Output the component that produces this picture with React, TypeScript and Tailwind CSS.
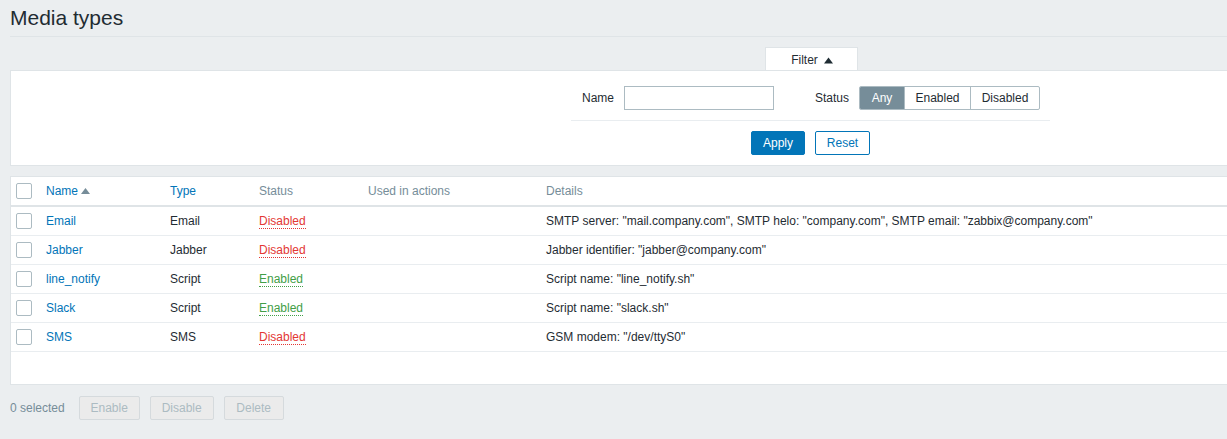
import React from "react";

const rows = [
  { name: "Email", type: "Email", enabled: false, details: 'SMTP server: "mail.company.com", SMTP helo: "company.com", SMTP email: "zabbix@company.com"' },
  { name: "Jabber", type: "Jabber", enabled: false, details: 'Jabber identifier: "jabber@company.com"' },
  { name: "line_notify", type: "Script", enabled: true, details: 'Script name: "line_notify.sh"' },
  { name: "Slack", type: "Script", enabled: true, details: 'Script name: "slack.sh"' },
  { name: "SMS", type: "SMS", enabled: false, details: 'GSM modem: "/dev/ttyS0"' },
];

function Checkbox() {
  return <span className="block w-[16px] h-[16px] border border-[#acbbc2] bg-white rounded-[2px]" />;
}

function Up({ color, w = 9, h = 6 }: { color: string; w?: number; h?: number }) {
  return (
    <svg width={w} height={h} viewBox="0 0 9 6" className="inline-block">
      <polygon points="4.5,0 9,6 0,6" fill={color} />
    </svg>
  );
}

export default function App() {
  return (
    <div className="w-full h-[439px] overflow-hidden bg-[#ebeef0] text-[12px] text-[#1f2c33] font-['Liberation_Sans',Arial,sans-serif]">
      <div className="w-[1620px] px-[10px]">
        {/* Title */}
        <div className="pt-[6px] pb-[6px] border-b border-[#dfe4e7]">
          <h1 className="text-[21px] leading-[24px] text-[#1f2c33]">Media types</h1>
        </div>

        {/* Filter tab */}
        <div className="mt-[10px] flex justify-center pl-[2px]">
          <div className="w-[93px] h-[23px] bg-white border-t border-x border-[#dfe4e7] flex items-center justify-center gap-[6px] pt-[2px] pl-[2px]">
            <span>Filter</span>
            <Up color="#1f2c33" w={9} h={7} />
          </div>
        </div>

        {/* Filter panel */}
        <div className="bg-white border border-[#dfe4e7] border-r-0">
          <div className="w-[479px] mx-auto">
            <div className="pt-[15px] pb-[10px] border-b border-[#e9edf0]">
              <div className="flex items-center h-[24px] pl-[11px]">
                <span className="w-[42px]">Name</span>
                <span className="block w-[150px] h-[24px] border border-[#acbbc2] bg-white" />
                <span className="ml-[41px] w-[44px]">Status</span>
                <div className="flex h-[24px] border border-[#acbbc2] rounded-[2px] overflow-hidden">
                  <span className="w-[44px] flex items-center justify-center bg-[#768d99] text-white">Any</span>
                  <span className="w-[66px] flex items-center justify-center border-l border-[#acbbc2]">Enabled</span>
                  <span className="w-[69px] flex items-center justify-center border-l border-[#acbbc2]">Disabled</span>
                </div>
              </div>
            </div>
            <div className="pt-[10px] pb-[10px] flex justify-center gap-[10px]">
              <span className="w-[54px] h-[24px] flex items-center justify-center bg-[#0275b8] border border-[#0275b8] text-white rounded-[2px]">Apply</span>
              <span className="w-[55px] h-[24px] flex items-center justify-center bg-white border border-[#0275b8] text-[#0275b8] rounded-[2px]">Reset</span>
            </div>
          </div>
        </div>

        {/* Table */}
        <div className="mt-[10px] bg-white border border-[#dfe4e7] border-r-0 pb-[32px]">
          <div className="grid grid-cols-[35px_124px_89px_109px_178px_1fr] h-[30px] border-b-2 border-[#dfe4e7] items-center">
            <div className="pl-[5px]"><Checkbox /></div>
            <div className="text-[#0275b8] flex items-center gap-[3px]">Name <Up color="#768d99" w={9} h={6} /></div>
            <div className="text-[#0275b8]">Type</div>
            <div className="text-[#768d99]">Status</div>
            <div className="text-[#768d99]">Used in actions</div>
            <div className="text-[#768d99]">Details</div>
          </div>
          {rows.map((r) => (
            <div key={r.name} className="grid grid-cols-[35px_124px_89px_109px_178px_1fr] h-[29px] border-b border-[#e9edf0] items-center">
              <div className="pl-[5px]"><Checkbox /></div>
              <div className="text-[#0275b8]">{r.name}</div>
              <div>{r.type}</div>
              <div>
                <span
                  className={
                    r.enabled
                      ? "text-[#429e47] border-b border-dotted border-[#429e47]"
                      : "text-[#e33734] border-b border-dotted border-[#e33734]"
                  }
                >
                  {r.enabled ? "Enabled" : "Disabled"}
                </span>
              </div>
              <div />
              <div className="whitespace-nowrap">{r.details}</div>
            </div>
          ))}
        </div>

        {/* Footer */}
        <div className="mt-[11px] flex items-center">
          <span className="text-[#768d99] mr-[14px]">0 selected</span>
          <span className="w-[61px] h-[24px] flex items-center justify-center bg-[#ebebeb] border border-[#d5dadd] text-[#acbbc2] rounded-[2px] mr-[10px]">Enable</span>
          <span className="w-[64px] h-[24px] flex items-center justify-center bg-[#ebebeb] border border-[#d5dadd] text-[#acbbc2] rounded-[2px] mr-[10px]">Disable</span>
          <span className="w-[60px] h-[24px] flex items-center justify-center bg-[#ebebeb] border border-[#d5dadd] text-[#acbbc2] rounded-[2px]">Delete</span>
        </div>
      </div>
    </div>
  );
}
